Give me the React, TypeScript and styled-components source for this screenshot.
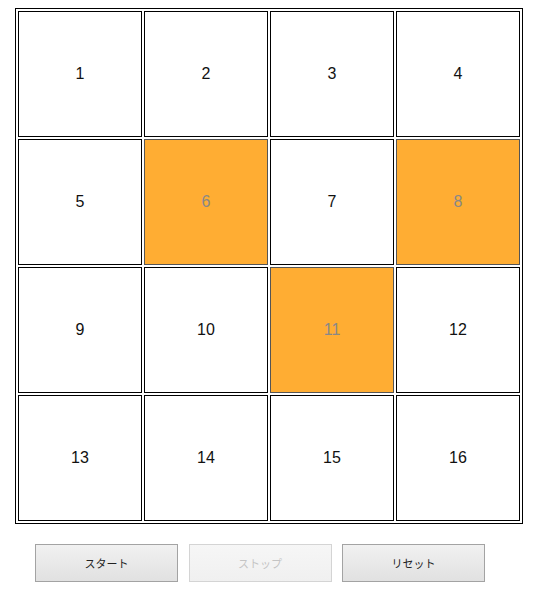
import React from "react";
import styled, { createGlobalStyle } from "styled-components";

const Global = createGlobalStyle`
  body {
    margin: 8px;
    background: #ffffff;
    font-family: "Liberation Sans", "Noto Sans CJK JP", sans-serif;
  }
`;

const Page = styled.div`
  padding-left: 7px;
`;

const Board = styled.table`
  border: 1px solid #000;
  border-spacing: 2px;
  border-collapse: separate;
`;

const Cell = styled.td<{ $on: boolean }>`
  box-sizing: border-box;
  width: 124px;
  height: 126px;
  padding: 0;
  text-align: center;
  vertical-align: middle;
  font-size: 16px;
  border: 1px solid ${(p) => (p.$on ? "#555" : "#000")};
  background: ${(p) => (p.$on ? "#ffad33" : "#fff")};
  color: ${(p) => (p.$on ? "#888" : "#111")};
`;

const Controls = styled.div`
  display: flex;
  gap: 10.5px;
  margin-top: 20px;
  padding-left: 20px;
`;

const Button = styled.button`
  box-sizing: border-box;
  width: 143px;
  height: 38px;
  border: 1px solid #a3a3a3;
  border-radius: 0;
  background: linear-gradient(#f1f1f1, #e1e1e1);
  color: #222;
  font-family: "Noto Sans CJK JP", sans-serif;
  font-size: 11px;
  padding: 0;

  &:disabled {
    border-color: #d4d4d4;
    background: linear-gradient(#f6f6f6, #f0f0f0);
    color: #c4c4c4;
  }
`;

const highlighted = new Set([6, 8, 11]);

export default function App() {
  const rows = [0, 1, 2, 3].map((r) => [1, 2, 3, 4].map((c) => r * 4 + c));
  return (
    <Page>
      <Global />
      <Board>
        <tbody>
          {rows.map((row, i) => (
            <tr key={i}>
              {row.map((n) => (
                <Cell key={n} $on={highlighted.has(n)}>
                  {n}
                </Cell>
              ))}
            </tr>
          ))}
        </tbody>
      </Board>
      <Controls>
        <Button>スタート</Button>
        <Button disabled>ストップ</Button>
        <Button>リセット</Button>
      </Controls>
    </Page>
  );
}
